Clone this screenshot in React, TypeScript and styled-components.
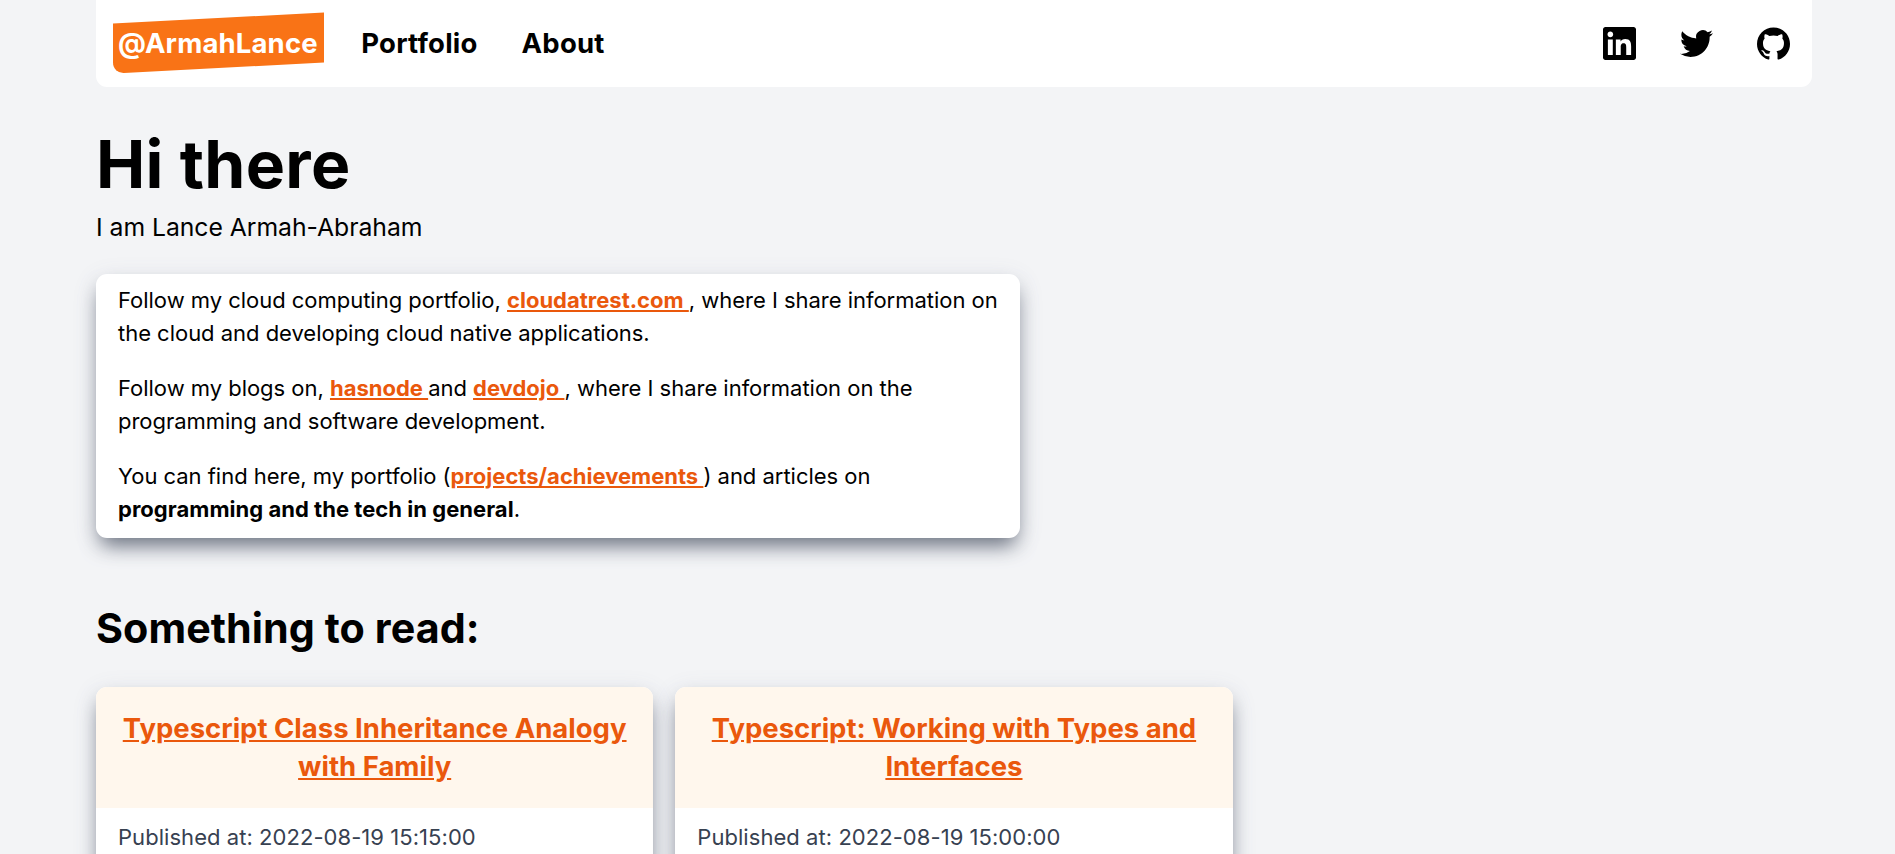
import React from "react";
import styled, { createGlobalStyle } from "styled-components";

const GlobalStyle = createGlobalStyle`
  *, *::before, *::after { box-sizing: border-box; }
  html { font-size: 22px; }
  body {
    margin: 0;
    height: 100vh;
    overflow: hidden;
    background: #f3f4f6;
    color: #000;
    font-family: Inter, "Liberation Sans", sans-serif;
    line-height: 1.5;
  }
  h1, h2, h3, p { margin: 0; }
`;

const Page = styled.div`
  width: 78rem;
  margin-left: 96px;
`;

const Header = styled.header`
  display: flex;
  align-items: center;
  justify-content: space-between;
  height: 87px;
  padding: 0 1rem 0 0.75rem;
  background: #fff;
  border-radius: 0 0 0.5rem 0.5rem;
`;

const Nav = styled.nav`
  display: flex;
  align-items: center;
  font-size: 1.25rem;
  line-height: 1.75rem;
  font-weight: 700;
`;

const Brand = styled.a`
  position: relative;
  z-index: 0;
  padding: 0.25rem;
  color: #fff;
  letter-spacing: 0.15px;
  &::before {
    content: "";
    position: absolute;
    z-index: -1;
    inset: -1px 0 1px;
    background: #f97316;
    border-bottom-left-radius: 0.5rem;
    transform: skewY(-3deg);
  }
`;

const NavLink = styled.a`
  margin-left: 2rem;
  letter-spacing: 0.22px;
  ${Brand} + & { margin-left: 38px; }
`;

const Socials = styled.div`
  display: flex;
  gap: 2rem;
`;

const Icon = styled.svg`
  display: block;
  width: 1.5rem;
  height: 1.5rem;
  fill: #000;
`;

const Title = styled.h1`
  margin-top: 2rem;
  font-size: 3rem;
  line-height: 1;
  font-weight: 700;
  letter-spacing: 0.3px;
`;

const Subtitle = styled.p`
  margin-top: 0.5rem;
  font-size: 1.125rem;
  line-height: 1.75rem;
  letter-spacing: -0.04px;
`;

const Card = styled.section`
  overflow: hidden;
  background: #fff;
  border-radius: 0.5rem;
  box-shadow: 0 12px 20px -5px #6b7280, 0 6px 24px rgba(107, 114, 128, 0.16);
`;

const Intro = styled(Card)`
  display: flex;
  flex-direction: column;
  gap: 1rem;
  width: 42rem;
  margin-top: 1.25rem;
  padding: 10px 20px 12px 1rem;
  letter-spacing: -0.025px;
  strong { letter-spacing: 0.03px; }
`;

const Link = styled.a`
  color: #ea580c;
  font-weight: 700;
  letter-spacing: 0;
  text-decoration: underline;
`;

const SectionTitle = styled.h2`
  margin-top: 3rem;
  font-size: 1.875rem;
  line-height: 2.25rem;
  font-weight: 700;
  letter-spacing: 0.07px;
`;

const Articles = styled.div`
  display: grid;
  grid-template-columns: 1fr 1fr;
  gap: 1rem;
  width: 1136.6px;
  margin-top: 1.5rem;
`;

const ArticleHead = styled.h3`
  padding: 1rem;
  background: #fff7ed;
  font-size: 1.25rem;
  line-height: 1.75rem;
  text-align: center;
`;

const Published = styled.p`
  padding: 13px 1rem 1rem;
  color: #374151;
  letter-spacing: 0.05px;
`;

const SOCIAL_ICONS = [
  {
    label: "LinkedIn",
    path: "M20.447 20.452h-3.554v-5.569c0-1.328-.027-3.037-1.852-3.037-1.853 0-2.136 1.445-2.136 2.939v5.667H9.351V9h3.414v1.561h.046c.477-.9 1.637-1.85 3.37-1.85 3.601 0 4.267 2.37 4.267 5.455v6.286zM5.337 7.433c-1.144 0-2.063-.926-2.063-2.065 0-1.138.92-2.063 2.063-2.063 1.14 0 2.064.925 2.064 2.063 0 1.139-.925 2.065-2.064 2.065zm1.782 13.019H3.555V9h3.564v11.452zM22.225 0H1.771C.792 0 0 .774 0 1.729v20.542C0 23.227.792 24 1.771 24h20.451C23.2 24 24 23.227 24 22.271V1.729C24 .774 23.2 0 22.222 0h.003z",
  },
  {
    label: "Twitter",
    path: "M23.953 4.57a10 10 0 01-2.825.775 4.958 4.958 0 002.163-2.723c-.951.555-2.005.959-3.127 1.184a4.92 4.92 0 00-8.384 4.482C7.69 8.095 4.067 6.13 1.64 3.162a4.822 4.822 0 00-.666 2.475c0 1.71.87 3.213 2.188 4.096a4.904 4.904 0 01-2.228-.616v.06a4.923 4.923 0 003.946 4.827 4.996 4.996 0 01-2.212.085 4.936 4.936 0 004.604 3.417 9.867 9.867 0 01-6.102 2.105c-.39 0-.779-.023-1.17-.067a13.995 13.995 0 007.557 2.209c9.053 0 13.998-7.496 13.998-13.985 0-.21 0-.42-.015-.63A9.935 9.935 0 0024 4.59z",
  },
  {
    label: "GitHub",
    path: "M12 .297c-6.63 0-12 5.373-12 12 0 5.303 3.438 9.8 8.205 11.385.6.113.82-.258.82-.577 0-.285-.01-1.04-.015-2.04-3.338.724-4.042-1.61-4.042-1.61C4.422 18.07 3.633 17.7 3.633 17.7c-1.087-.744.084-.729.084-.729 1.205.084 1.838 1.236 1.838 1.236 1.07 1.835 2.809 1.305 3.495.998.108-.776.417-1.305.76-1.605-2.665-.3-5.466-1.332-5.466-5.93 0-1.31.465-2.38 1.235-3.22-.135-.303-.54-1.523.105-3.176 0 0 1.005-.322 3.3 1.23.96-.267 1.98-.399 3-.405 1.02.006 2.04.138 3 .405 2.28-1.552 3.285-1.23 3.285-1.23.645 1.653.24 2.873.12 3.176.765.84 1.23 1.91 1.23 3.22 0 4.61-2.805 5.625-5.475 5.92.42.36.81 1.096.81 2.22 0 1.606-.015 2.896-.015 3.286 0 .315.21.69.825.57C20.565 22.092 24 17.592 24 12.297c0-6.627-5.373-12-12-12",
  },
];

const ARTICLES = [
  { title: "Typescript Class Inheritance Analogy with Family", date: "2022-08-19 15:15:00" },
  { title: "Typescript: Working with Types and Interfaces", date: "2022-08-19 15:00:00" },
];

export default function App() {
  return (
    <>
      <GlobalStyle />
      <Page>
        <Header>
          <Nav>
            <Brand>@ArmahLance</Brand>
            <NavLink>Portfolio</NavLink>
            <NavLink>About</NavLink>
          </Nav>
          <Socials>
            {SOCIAL_ICONS.map((icon) => (
              <Icon key={icon.label} viewBox="0 0 24 24" aria-label={icon.label}>
                <path d={icon.path} />
              </Icon>
            ))}
          </Socials>
        </Header>
        <Title>Hi there</Title>
        <Subtitle>I am Lance Armah-Abraham</Subtitle>
        <Intro>
          <p>
            Follow my cloud computing portfolio, <Link>cloudatrest.com </Link>, where I share
            information on the cloud and developing cloud native applications.
          </p>
          <p>
            Follow my blogs on, <Link>hasnode </Link>and <Link>devdojo </Link>, where I share
            information on the programming and software development.
          </p>
          <p>
            You can find here, my portfolio (<Link>projects/achievements </Link>) and articles on{" "}
            <strong>programming and the tech in general</strong>.
          </p>
        </Intro>
        <SectionTitle>Something to read:</SectionTitle>
        <Articles>
          {ARTICLES.map((article) => (
            <Card as="article" key={article.title}>
              <ArticleHead>
                <Link>{article.title}</Link>
              </ArticleHead>
              <Published>Published at: {article.date}</Published>
            </Card>
          ))}
        </Articles>
      </Page>
    </>
  );
}
